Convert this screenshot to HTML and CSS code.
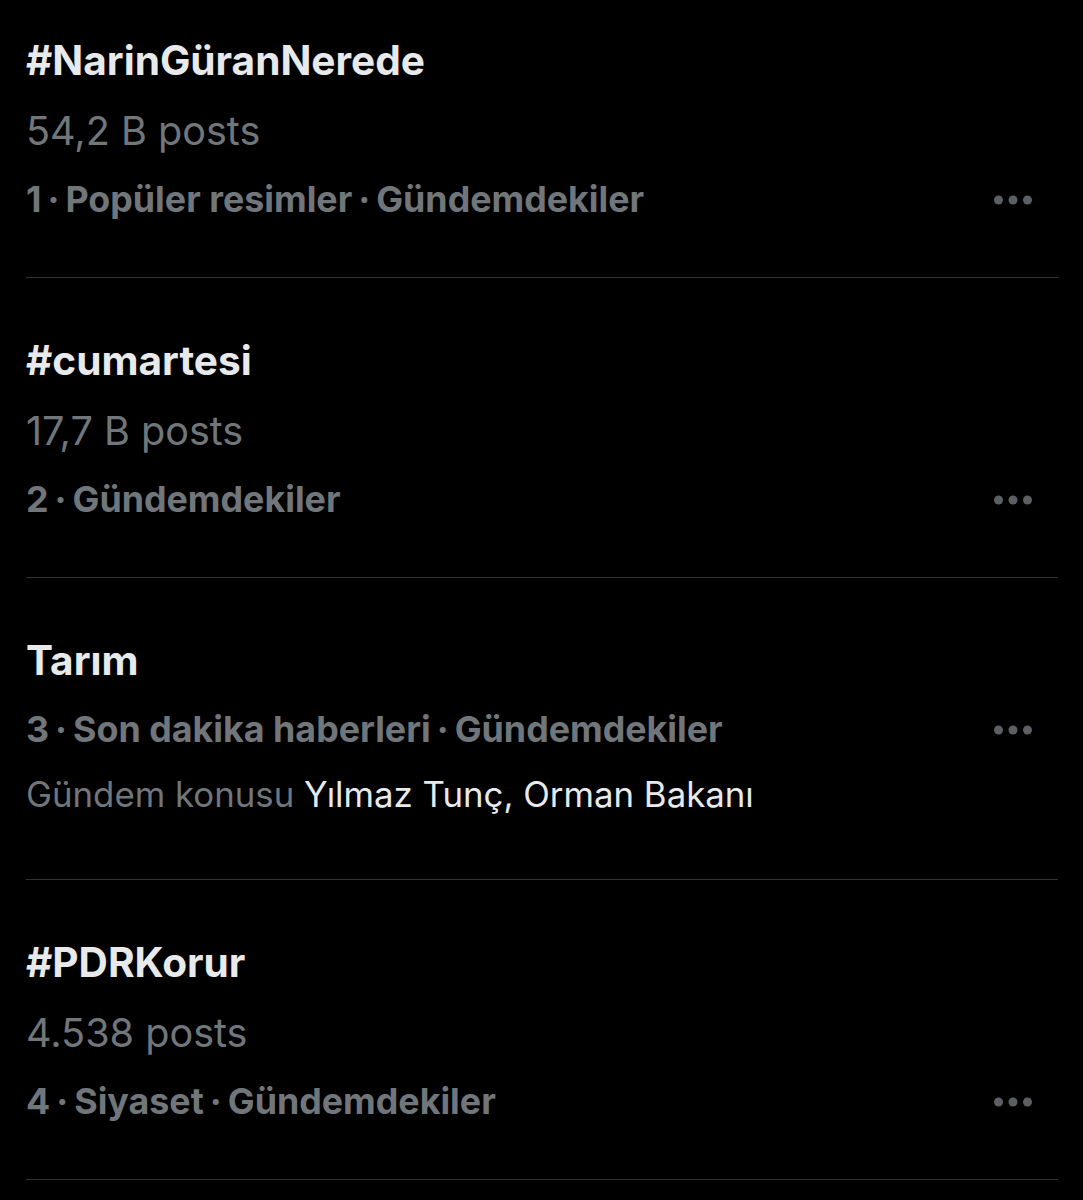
FILE: index.html
```html
<!DOCTYPE html>
<html lang="tr">
<head>
<meta charset="utf-8">
<title>Gündem</title>
<link rel="stylesheet" href="styles.css">
</head>
<body>
<main class="trends">
  <section class="trend">
    <div class="trend-title">#NarinGüranNerede</div>
    <div class="trend-count">54,2 B posts</div>
    <div class="trend-meta">
      <span class="meta-text">1<span class="sep">·</span>Popüler resimler<span class="sep">·</span>Gündemdekiler</span>
      <svg class="more" viewBox="0 0 38 10" width="38" height="10" aria-hidden="true"><circle cx="4.5" cy="5" r="4.5"/><circle cx="19" cy="5" r="4.5"/><circle cx="33.5" cy="5" r="4.5"/></svg>
    </div>
  </section>
  <section class="trend">
    <div class="trend-title">#cumartesi</div>
    <div class="trend-count">17,7 B posts</div>
    <div class="trend-meta">
      <span class="meta-text">2<span class="sep">·</span>Gündemdekiler</span>
      <svg class="more" viewBox="0 0 38 10" width="38" height="10" aria-hidden="true"><circle cx="4.5" cy="5" r="4.5"/><circle cx="19" cy="5" r="4.5"/><circle cx="33.5" cy="5" r="4.5"/></svg>
    </div>
  </section>
  <section class="trend">
    <div class="trend-title">Tarım</div>
    <div class="trend-meta">
      <span class="meta-text">3<span class="sep">·</span>Son dakika haberleri<span class="sep">·</span>Gündemdekiler</span>
      <svg class="more" viewBox="0 0 38 10" width="38" height="10" aria-hidden="true"><circle cx="4.5" cy="5" r="4.5"/><circle cx="19" cy="5" r="4.5"/><circle cx="33.5" cy="5" r="4.5"/></svg>
    </div>
    <div class="trend-desc">Gündem konusu <span class="desc-topic">Yılmaz Tunç, Orman Bakanı</span></div>
  </section>
  <section class="trend">
    <div class="trend-title">#PDRKorur</div>
    <div class="trend-count">4.538 posts</div>
    <div class="trend-meta">
      <span class="meta-text">4<span class="sep">·</span>Siyaset<span class="sep">·</span>Gündemdekiler</span>
      <svg class="more" viewBox="0 0 38 10" width="38" height="10" aria-hidden="true"><circle cx="4.5" cy="5" r="4.5"/><circle cx="19" cy="5" r="4.5"/><circle cx="33.5" cy="5" r="4.5"/></svg>
    </div>
  </section>
</main>
</body>
</html>
```
FILE: styles.css
```css
html, body {
  margin: 0;
  padding: 0;
  background: #000;
}
body {
  font-family: Inter, "Noto Sans", "Liberation Sans", sans-serif;
  color: #e7e9ea;
}
.trends {
  display: flex;
  flex-direction: column;
  padding: 0 25px 0 26px;
}
.trend {
  display: flex;
  flex-direction: column;
  padding: 48px 0 44px;
  border-bottom: 1px solid #2f3336;
}
.trend:first-child {
  padding-top: 26px;
}
.trend-title {
  font-size: 40.6px;
  font-weight: 700;
  line-height: 70px;
  color: #e7e9ea;
}
.trend-count {
  font-size: 39.6px;
  font-weight: 400;
  line-height: 70px;
  color: #71767b;
}
.trend-meta {
  display: flex;
  align-items: center;
  justify-content: space-between;
  font-size: 35.8px;
  font-weight: 700;
  line-height: 67px;
  color: #71767b;
}
.sep {
  display: inline-block;
  padding: 0 6px;
}
.more {
  fill: #5c6064;
  margin-right: 26px;
  flex: none;
}
.trend-desc {
  font-size: 34.8px;
  font-weight: 400;
  line-height: 63px;
  color: #71767b;
  margin-bottom: 9px;
}
.desc-topic {
  color: #e7e9ea;
}
```
